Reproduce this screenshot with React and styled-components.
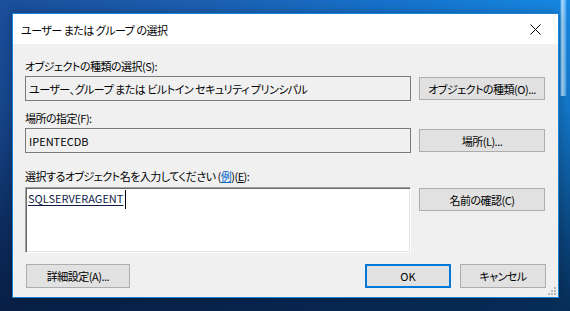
import React from "react";
import styled, { createGlobalStyle } from "styled-components";

const Global = createGlobalStyle`
  html, body { margin: 0; padding: 0; }
  body {
    width: 570px;
    height: 311px;
    overflow: hidden;
    font-family: "Noto Sans CJK JP", "Noto Sans", sans-serif;
    font-feature-settings: "palt";
    font-size: 11px;
    letter-spacing: -0.5px;
    color: #000;
    background-color: #0c3470;
    background-image:
      linear-gradient(90deg, rgba(0,0,0,0) 0, rgba(0,0,0,0) 560px, rgba(200,235,255,0.85) 562px, rgba(160,215,255,0.6) 565px, rgba(0,0,0,0) 567px),
      linear-gradient(180deg, rgba(2,14,40,0) 0%, rgba(2,14,40,0.15) 35%, rgba(2,14,40,0.55) 75%, rgba(2,14,40,0.75) 100%),
      linear-gradient(90deg, #1a4f9c 0%, #1c5fb0 35%, #1673cd 70%, #1688e2 100%);
    background-size: 100% 96px, 100% 100%, 100% 100%;
    background-repeat: no-repeat;
  }
`;

const Desktop = styled.div`
  padding: 13px 0 0 12px;
`;

const Window = styled.div`
  position: relative;
  width: 545px;
  border: 1px solid #1883d7;
  background: #f0f0f0;
  box-shadow: 0 0 10px rgba(0, 0, 0, 0.25);
`;

const TitleBar = styled.div`
  height: 30px;
  background: #ffffff;
  display: flex;
  align-items: center;
  justify-content: space-between;
  padding-left: 8px;
`;

const Title = styled.span`
  line-height: 16px;
  padding-top: 1px;
`;

const CloseButton = styled.div`
  width: 46px;
  height: 30px;
  display: flex;
  align-items: center;
  justify-content: center;
  padding-top: 1px;
`;

const Body = styled.div`
  padding: 14px 12px 9px 12px;
  display: flex;
  flex-direction: column;
`;

const Row = styled.div`
  display: flex;
  gap: 8px;
  margin-top: ${(p) => p.$gap || 0}px;
`;

const FieldGroup = styled.div`
  width: 386px;
  display: flex;
  flex-direction: column;
`;

const Label = styled.div`
  height: 16px;
  line-height: 16px;
  margin-bottom: ${(p) => p.$space || 2}px;
  white-space: nowrap;
`;

const ReadOnlyBox = styled.div`
  box-sizing: border-box;
  height: 25px;
  border: 1px solid #7a7a7a;
  background: #f0f0f0;
  padding: 0 3px;
  display: flex;
  align-items: center;
  white-space: nowrap;
  letter-spacing: ${(p) => (p.$latin ? "0" : "-0.5px")};
`;

const InputArea = styled.div`
  box-sizing: border-box;
  height: 66px;
  background: #ffffff;
  border-top: 1px solid #a0a0a0;
  border-left: 1px solid #a0a0a0;
  border-right: 1px solid #ffffff;
  border-bottom: 1px solid #ffffff;
  box-shadow: inset 1px 1px 0 #696969, inset -1px -1px 0 #e3e3e3;
  padding: 2px 2px;
`;

const ResolvedName = styled.span`
  display: inline-block;
  line-height: 16px;
  letter-spacing: 0;
  color: #0f1c4a;
  text-decoration: underline;
  text-underline-offset: 2px;
  border-right: 1px solid #000;
  padding-right: 2px;
  height: 19px;
`;

const Button = styled.div`
  box-sizing: border-box;
  width: ${(p) => p.$w || 126}px;
  height: ${(p) => p.$h || 23}px;
  margin-top: ${(p) => p.$top || 0}px;
  background: #e1e1e1;
  border: ${(p) => (p.$default ? "2px solid #0078d7" : "1px solid #adadad")};
  display: flex;
  align-items: center;
  justify-content: center;
  white-space: nowrap;
  flex-shrink: 0;
  letter-spacing: ${(p) => (p.$latin ? "0" : "-0.5px")};
`;

const Footer = styled.div`
  display: flex;
  align-items: center;
  margin-top: 11px;
  padding-left: 1px;
`;

const Spacer = styled.div`
  flex: 1;
`;

const FooterRight = styled.div`
  display: flex;
  gap: 9px;
`;

const Link = styled.span`
  color: #0066cc;
  text-decoration: underline;
`;

const Mnemonic = styled.span`
  text-decoration: underline;
`;

const SizeGrip = styled.svg`
  position: absolute;
  right: 2px;
  bottom: 2px;
`;

export default function App() {
  return (
    <>
      <Global />
      <Desktop>
        <Window>
          <TitleBar>
            <Title>ユーザー または グループ の選択</Title>
            <CloseButton>
              <svg width="11" height="11" viewBox="0 0 11 11">
                <path d="M0.5 0.5 L10.5 10.5 M10.5 0.5 L0.5 10.5" stroke="#000" strokeWidth="1" />
              </svg>
            </CloseButton>
          </TitleBar>
          <Body>
            <Row>
              <FieldGroup>
                <Label>オブジェクトの種類の選択(S):</Label>
                <ReadOnlyBox>ユーザー、グループ または ビルトイン セキュリティ プリンシパル</ReadOnlyBox>
              </FieldGroup>
              <Button $top={19}>オブジェクトの種類(O)...</Button>
            </Row>
            <Row $gap={9}>
              <FieldGroup>
                <Label>場所の指定(F):</Label>
                <ReadOnlyBox $latin>IPENTECDB</ReadOnlyBox>
              </FieldGroup>
              <Button $top={19}>場所(L)...</Button>
            </Row>
            <Row $gap={15}>
              <FieldGroup>
                <Label $space={3}>
                  選択するオブジェクト名を入力してください (<Link>例</Link>)(<Mnemonic>E</Mnemonic>):
                </Label>
                <InputArea>
                  <ResolvedName>SQLSERVERAGENT</ResolvedName>
                </InputArea>
              </FieldGroup>
              <Button $top={20}>名前の確認(C)</Button>
            </Row>
            <Footer>
              <Button $w={104} $h={24}>詳細設定(A)...</Button>
              <Spacer />
              <FooterRight>
                <Button $w={86} $h={24} $default $latin>OK</Button>
                <Button $w={86} $h={24}>キャンセル</Button>
              </FooterRight>
            </Footer>
          </Body>
          <SizeGrip width="8" height="8" viewBox="0 0 8 8">
            <g fill="#b8b8b8">
              <rect x="6" y="0" width="2" height="2" />
              <rect x="3" y="3" width="2" height="2" />
              <rect x="6" y="3" width="2" height="2" />
              <rect x="0" y="6" width="2" height="2" />
              <rect x="3" y="6" width="2" height="2" />
              <rect x="6" y="6" width="2" height="2" />
            </g>
          </SizeGrip>
        </Window>
      </Desktop>
    </>
  );
}
